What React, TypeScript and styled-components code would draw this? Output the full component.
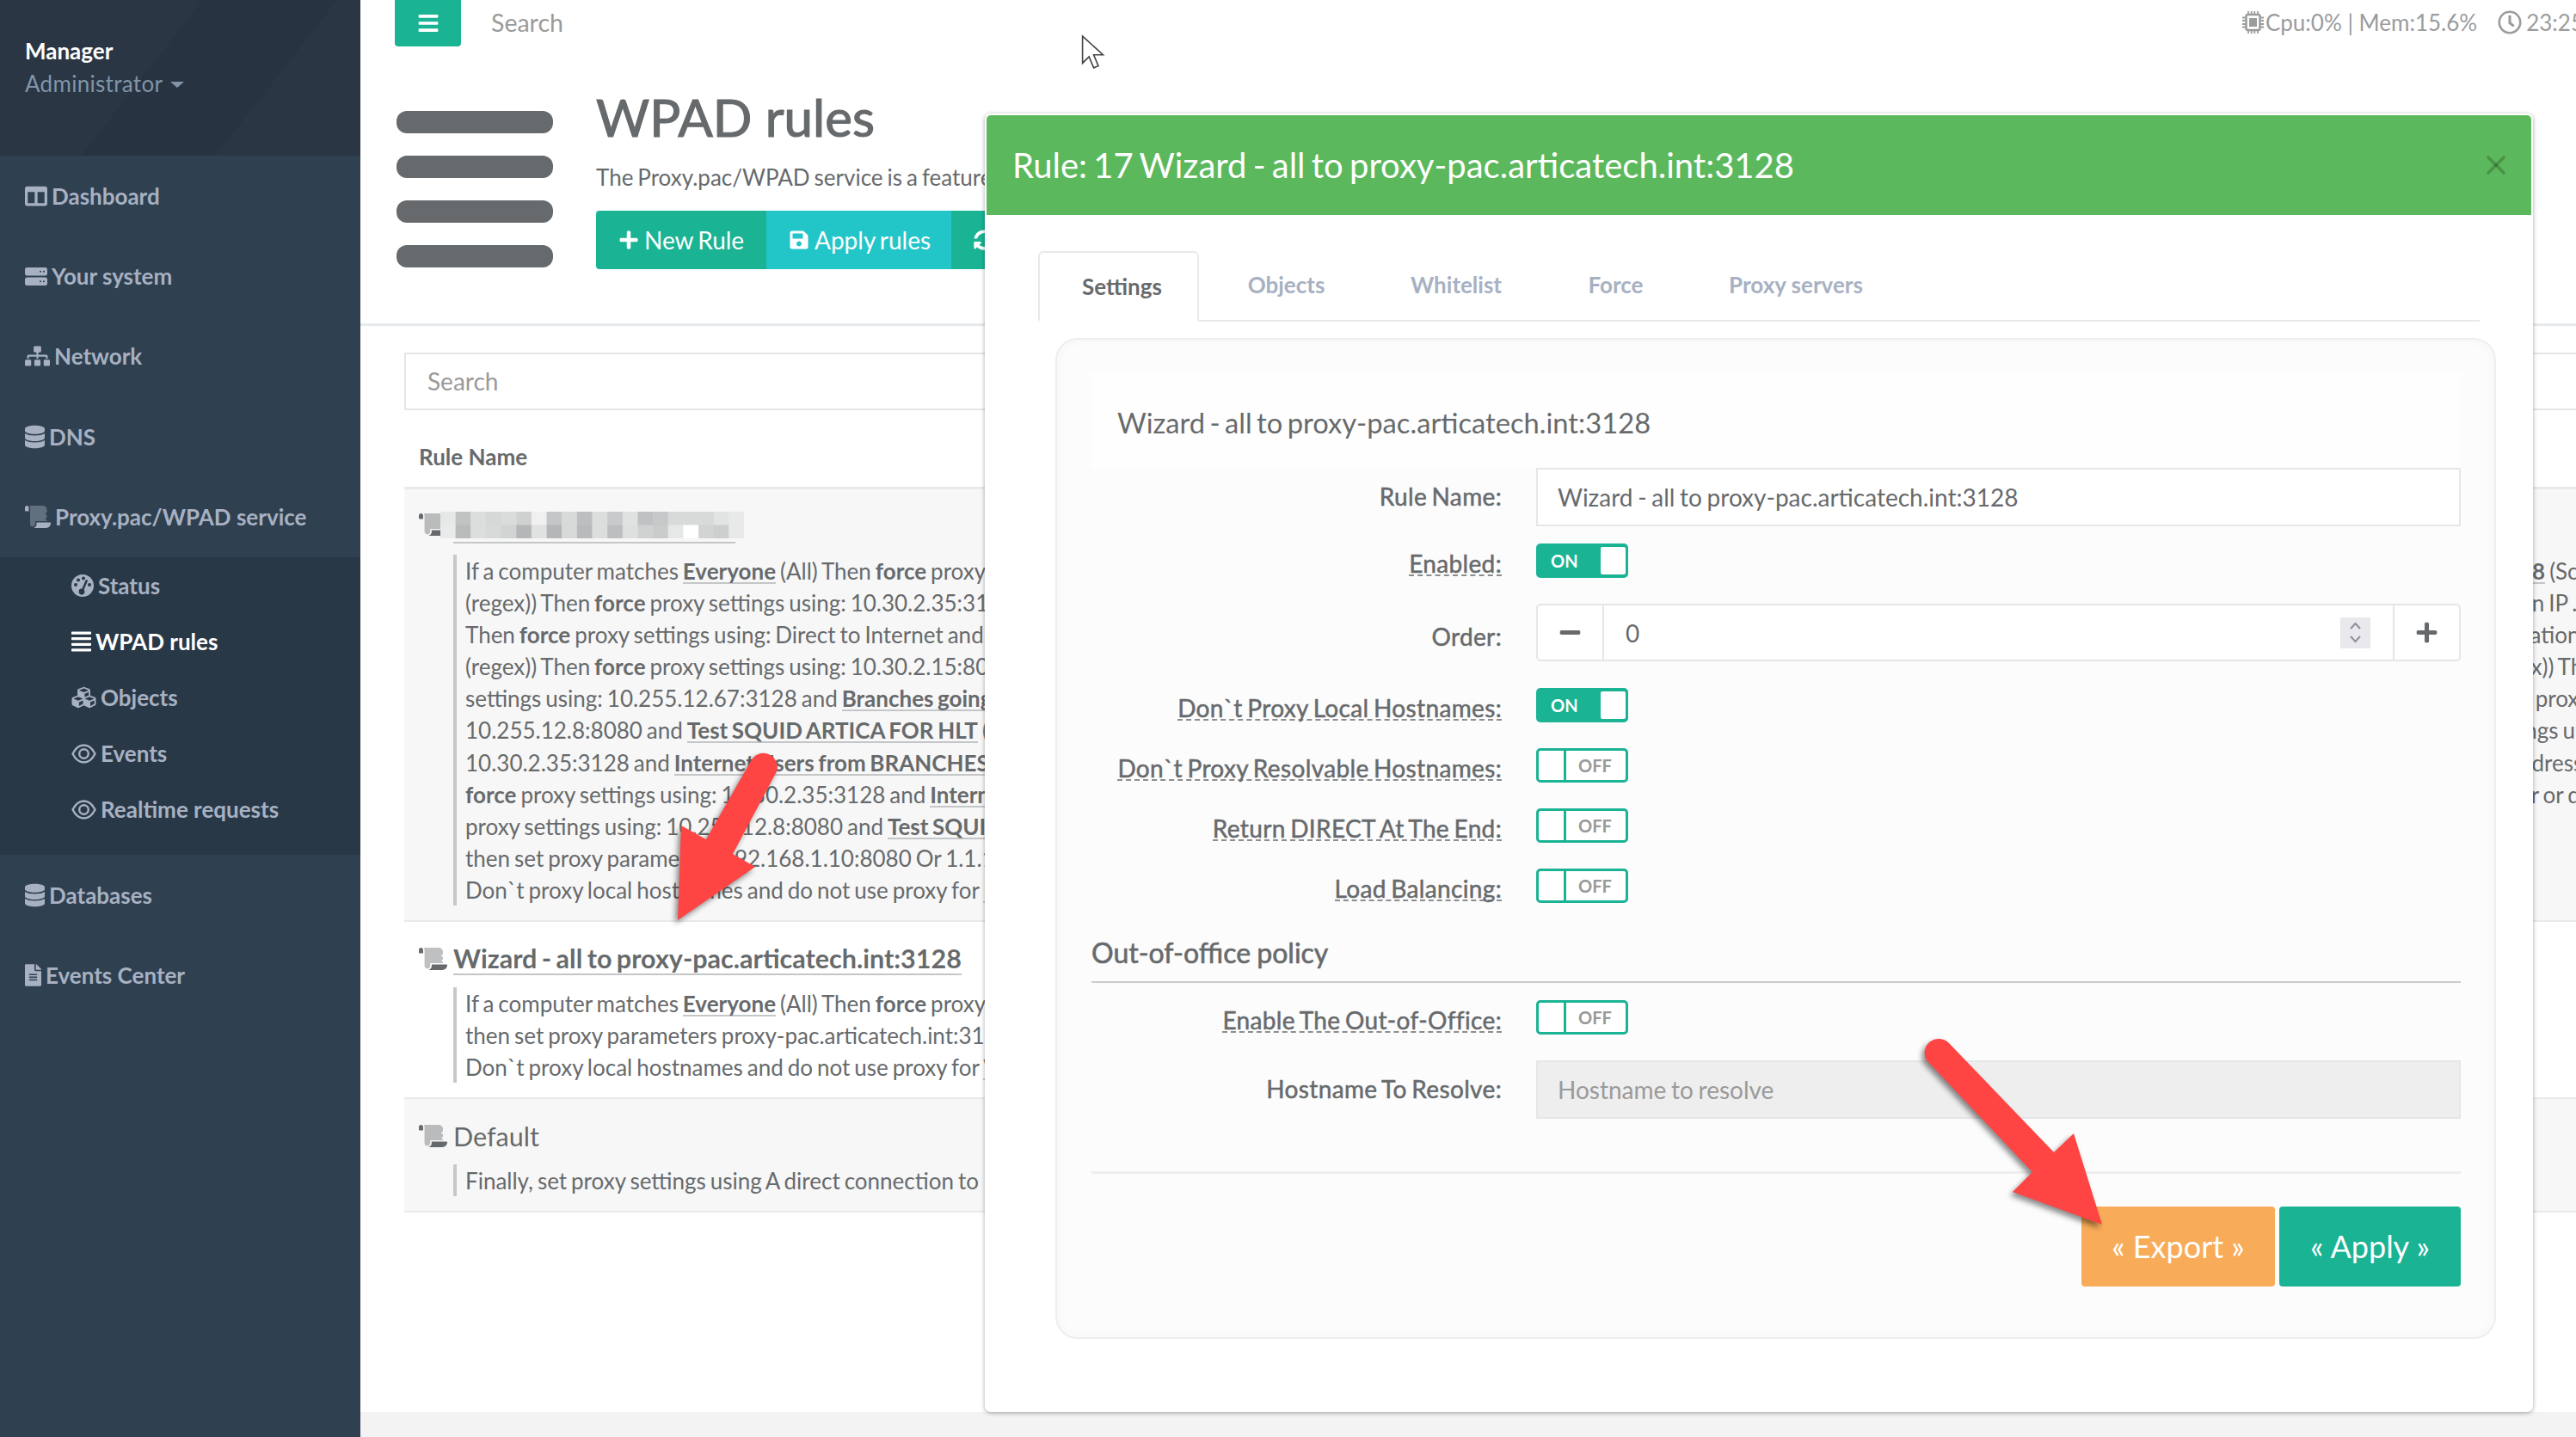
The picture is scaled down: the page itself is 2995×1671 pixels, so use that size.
import React from 'react';
import styled, { createGlobalStyle } from 'styled-components';
import { FaColumns, FaSitemap, FaDatabase, FaAlignJustify, FaCubes, FaFileAlt, FaBars, FaPlus, FaMinus, FaSave, FaSyncAlt, FaRegClock } from 'react-icons/fa';
import { X } from 'lucide-react';

const GlobalStyle = createGlobalStyle`
    html, body {
        margin: 0;
        width: 2995px;
        height: 1671px;
        overflow: hidden;
        background: #fff;
    }
    body {
        font-family: Lato, "Liberation Sans", sans-serif;
        font-size: 26px;
        color: #676a6c;
    }
    * { box-sizing: border-box; }
`;

const Page = styled.div`
    position: relative;
    display: flex;
    width: 2995px;
    height: 1671px;
    overflow: hidden;
`;

/* sidebar */
const Sidebar = styled.nav`
    flex: 0 0 419px;
    background: #2f4050;
    color: #a7b1c2;
    font-weight: 700;
`;

const Profile = styled.div`
    height: 181px;
    padding: 40px 0 0 29px;
    background:
        linear-gradient(128deg, transparent 42%, rgba(0,0,0,.05) 42%, rgba(0,0,0,.05) 70%, transparent 70%),
        #2a3644;
`;

const ProfileName = styled.div`
    color: #fff;
    line-height: 38px;
`;

const ProfileRole = styled.div`
    display: flex;
    align-items: center;
    gap: 9px;
    color: #8095a8;
    font-weight: 400;
    letter-spacing: .3px;
    line-height: 38px;
`;

const Caret = styled.span`
    width: 0;
    height: 0;
    margin-top: 3px;
    border-left: 8px solid transparent;
    border-right: 8px solid transparent;
    border-top: 7px solid #8095a8;
`;

const NavItem = styled.div`
    display: flex;
    align-items: center;
    gap: 5px;
    height: 93.4px;
    padding-left: 29px;
    white-space: nowrap;
`;

const SubNav = styled.div`
    height: 346px;
    background: #293846;
`;

const SubItem = styled.div<{ $active?: boolean }>`
    display: flex;
    align-items: center;
    gap: 5px;
    height: 65.2px;
    padding-left: 83px;
    white-space: nowrap;
    color: ${p => (p.$active ? '#fff' : '#a7b1c2')};
`;

const NavIcon = styled.span<{ $w: number }>`
    display: inline-flex;
    flex: 0 0 ${p => p.$w}px;
    svg {
        display: block;
        width: ${p => p.$w}px;
        height: 28px;
    }
`;

const DrawnIcon = styled.svg<{ $w: number; $h: number }>`
    flex: 0 0 ${p => p.$w}px;
    width: ${p => p.$w}px;
    height: ${p => p.$h}px;
`;

const ScrollIcon: React.FC<{ w?: number }> = ({ w = 30 }) => (
    <DrawnIcon $w={w} $h={26} viewBox="0 0 640 512" preserveAspectRatio="none" fill="currentColor">
        <path d="M48 0C21.5 0 0 21.5 0 48v64c0 8.8 7.2 16 16 16h80V48C96 21.5 74.500 0 48 0z" />
        <path opacity=".42" d="M111.600 0H448c52.900 0 96 43.100 96 96v50l-44 36 44 40v44l-38 32 38 34v20H256v60.600c0 31.900-21.700 61.400-53.200 66.500C162.700 485.700 128 454.900 128 416V48c0-18.100-6.300-34.600-16.400-48z" />
        <path d="M288 384v32c0 52.900-43.100 96-96 96h336c61.900 0 112-50.100 112-112 0-8.800-7.200-16-16-16H288z" />
    </DrawnIcon>
);

const ServerIcon = () => (
    <DrawnIcon $w={26} $h={21} viewBox="0 0 26 21">
        <rect x="0" y="0" width="26" height="9.500" rx="2.500" fill="#a7b1c2" />
        <rect x="0" y="11.500" width="26" height="9.500" rx="2.500" fill="#a7b1c2" />
        <circle cx="18" cy="4.700" r="1" fill="#2f4050" />
        <circle cx="22" cy="4.700" r="1" fill="#2f4050" />
        <circle cx="18" cy="16.200" r="1" fill="#2f4050" />
        <circle cx="22" cy="16.200" r="1" fill="#2f4050" />
    </DrawnIcon>
);

const GaugeIcon = () => (
    <DrawnIcon $w={26} $h={26} viewBox="0 0 26 26">
        <circle cx="13" cy="13" r="13" fill="#a7b1c2" />
        <circle cx="5" cy="12" r="2" fill="#293846" />
        <circle cx="8" cy="6.500" r="2" fill="#293846" />
        <circle cx="14" cy="4.500" r="2" fill="#293846" />
        <circle cx="21" cy="12" r="2" fill="#293846" />
        <path d="M11 23L18 6.500" stroke="#293846" strokeWidth="2.500" />
        <circle cx="12" cy="20" r="3.400" fill="#293846" />
    </DrawnIcon>
);

const EyeIcon = () => (
    <DrawnIcon $w={29} $h={23} viewBox="0 0 29 23" fill="none" stroke="#a7b1c2" strokeWidth="2.400">
        <path d="M1.500 11.500C5 4.500 9.500 1.500 14.500 1.500S24 4.500 27.500 11.500C24 18.500 19.500 21.500 14.500 21.500S5 18.500 1.500 11.500Z" />
        <circle cx="14.500" cy="11.500" r="5.300" />
    </DrawnIcon>
);

const ChipIcon = () => (
    <DrawnIcon $w={25} $h={28} viewBox="0 0 25 28" fill="#9a9c9e">
        <rect x="4.500" y="5" width="16" height="18" fill="none" stroke="#9a9c9e" strokeWidth="2.500" rx="2" />
        <rect x="8" y="9" width="9" height="10" />
        <path d="M7 1v4M10.700 1v4M14.300 1v4M18 1v4M7 23v4M10.700 23v4M14.300 23v4M18 23v4M0 8.500h4M0 12h4M0 16h4M0 19.500h4M21 8.500h4M21 12h4M21 16h4M21 19.500h4" stroke="#9a9c9e" strokeWidth="1.800" />
    </DrawnIcon>
);

/* main column */
const Main = styled.main`
    flex: 1;
    min-width: 0;
    display: flex;
    flex-direction: column;
`;

const Content = styled.div`
    flex: 1;
    min-height: 0;
    overflow: hidden;
`;

const Footer = styled.div`
    flex: 0 0 29px;
    background: #f3f3f4;
`;

const TopBar = styled.div`
    display: flex;
    justify-content: space-between;
    height: 105px;
    padding-left: 40px;
`;

const TopLeft = styled.div`
    display: flex;
    align-items: flex-start;
    gap: 35px;
`;

const MenuButton = styled.div`
    display: flex;
    align-items: center;
    justify-content: center;
    width: 77px;
    height: 54px;
    background: #1ab394;
    border-radius: 0 0 4px 4px;
    color: #fff;
    svg { width: 26px; height: 26px; }
`;

const TopSearch = styled.div`
    color: #9a9a9a;
    font-size: 28.500px;
    line-height: 52px;
`;

const Status = styled.div`
    display: flex;
    align-items: center;
    gap: 2px;
    width: 388px;
    height: 52px;
    overflow: hidden;
    white-space: nowrap;
    color: #9a9c9e;
`;

const StatusClock = styled.span`
    display: inline-flex;
    align-items: center;
    gap: 5px;
    margin-left: 22px;
    svg { width: 28px; height: 28px; }
`;

const Heading = styled.div`
    display: flex;
    gap: 50px;
    height: 274px;
    padding-left: 42px;
    border-bottom: 3px solid #e7eaec;
`;

const BigIcon = styled.svg`
    flex: none;
    width: 182px;
    height: 182px;
    margin-top: 24px;
    fill: #676a6c;
`;

const Title = styled.h1`
    margin: -2px 0 2px;
    font-size: 60px;
    font-weight: 400;
    line-height: 66px;
    -webkit-text-stroke: 1.2px currentColor;
`;

const Lead = styled.div`
    margin-top: 19px;
    line-height: 37px;
    word-spacing: -1.700px;
    white-space: nowrap;
`;

const ButtonGroup = styled.div`
    display: flex;
    margin-top: 20px;
    height: 68px;
`;

const HeadButton = styled.div<{ $bg: string; $w: number }>`
    display: flex;
    align-items: center;
    gap: 6px;
    width: ${p => p.$w}px;
    padding-left: 26px;
    background: ${p => p.$bg};
    color: #fff;
    font-size: 28px;
    word-spacing: -2px;
    white-space: nowrap;
    &:first-child { border-radius: 4px 0 0 4px; }
    svg { width: 24px; height: 24px; flex: none; }
`;

const TableWrap = styled.div`
    padding: 31px 0 0 51px;
`;

const SearchBox = styled.div`
    height: 67px;
    margin-right: -10px;
    padding-left: 25px;
    border: 2px solid #e5e6e7;
    color: #9a9a9a;
    font-size: 28px;
    line-height: 63px;
`;

const TableHead = styled.div`
    height: 92px;
    padding: 36px 0 0 17px;
    border-bottom: 3px solid #e7eaec;
    font-weight: 700;
    line-height: 37px;
`;

const Rule = styled.div<{ $odd?: boolean }>`
    padding: 23px 0 17px 17px;
    border-bottom: 2px solid #e7eaec;
    background: ${p => (p.$odd ? '#f7f7f7' : '#fff')};
`;

const RuleTitle = styled.div<{ $linked?: boolean }>`
    display: flex;
    align-items: center;
    gap: 7px;
    height: 40px;
    font-size: 30.500px;
    font-weight: ${p => (p.$linked ? 700 : 400)};
    word-spacing: -2px;
    white-space: nowrap;
    color: #676a6c;
`;

const RuleLink = styled.span`
    display: inline-block;
    line-height: 36px;
    border-bottom: 2px solid #c4c6c8;
`;

const Mosaic = styled.svg`
    flex: none;
    width: 353px;
    height: 31px;
    margin-left: -15px;
`;

const MosaicTitle = styled(RuleTitle)`
    margin-top: -2px;
`;

const RuleUnderline = styled.div`
    width: 328px;
    height: 2px;
    margin-left: 40px;
    background: #c4c6c8;
`;

const RuleBody = styled.div`
    margin: 13px 0 0 40px;
    padding-left: 10px;
    border-left: 4px solid #c8c8c8;
`;

const RuleLine = styled.div`
    display: flex;
    justify-content: space-between;
    height: 37.1px;
    line-height: 39px;
    word-spacing: -1.700px;
    white-space: nowrap;
`;

const RuleTail = styled.span`
    flex: none;
    width: 66px;
    overflow: hidden;
`;

const Strong = styled.b`
    font-weight: 700;
`;

const StrongLink = styled.b`
    display: inline-block;
    font-weight: 700;
    line-height: 26px;
    border-bottom: 2px solid #c4c6c8;
`;

/* modal */
const Modal = styled.div`
    position: absolute;
    left: 1145px;
    top: 132px;
    width: 1800px;
    height: 1510px;
    background: #fff;
    border: 2px solid #fff;
    border-radius: 7px;
    box-shadow: 0 1px 5px rgba(0,0,0,.35);
    z-index: 5;
`;

const ModalHeader = styled.div`
    display: flex;
    align-items: center;
    justify-content: space-between;
    height: 116px;
    padding: 0 23px 0 30px;
    background: #5cb85c;
    border-radius: 5px 5px 0 0;
    color: #fff;
    font-size: 40px;
    word-spacing: -3px;
    white-space: nowrap;
    svg { color: rgba(0,0,0,.2); }
`;

const ModalBody = styled.div`
    padding: 42px 60px 0;
`;

const Tabs = styled.div`
    display: flex;
    height: 82px;
    border-bottom: 2px solid #e7eaec;
`;

const Tab = styled.div<{ $active?: boolean; $w: number }>`
    flex: 0 0 ${p => p.$w}px;
    height: 82px;
    padding-left: ${p => (p.$active ? 8 : 0)}px;
    text-align: center;
    line-height: 79px;
    font-weight: 700;
    color: ${p => (p.$active ? '#676a6c' : '#a7b1c2')};
    background: ${p => (p.$active ? '#fff' : 'transparent')};
    border: ${p => (p.$active ? '2px solid #e7eaec' : 'none')};
    border-bottom: ${p => (p.$active ? '2px solid #fff' : 'none')};
    border-radius: 6px 6px 0 0;
`;

const Panel = styled.div`
    height: 1164px;
    margin: 19px -19px 0 20px;
    padding: 39px 39px 0 40px;
    background: #fcfcfc;
    border: 2px solid #eeeeee;
    border-radius: 26px;
    box-shadow: inset 0 0 14px rgba(0,0,0,.03);
`;

const PanelTitle = styled.div`
    height: 110px;
    padding: 38px 0 0 30px;
    background: #fefefe;
    font-size: 32.700px;
    word-spacing: -3px;
    line-height: 40px;
    white-space: nowrap;
`;

const FormRow = styled.div<{ $gap: number }>`
    display: flex;
    align-items: flex-start;
    gap: 40px;
    margin-top: ${p => p.$gap}px;
`;

const Label = styled.div<{ $top: number }>`
    flex: 0 0 477px;
    height: 30px;
    padding-top: ${p => p.$top}px;
    text-align: right;
    font-size: 28px;
    letter-spacing: .35px;
    word-spacing: -2px;
    line-height: 37px;
    white-space: nowrap;
    -webkit-text-stroke: .5px currentColor;
`;

const Hint = styled.span`
    display: inline-block;
    line-height: 26px;
    border-bottom: 2px dashed #8b8d8f;
`;

const TextField = styled.div<{ $disabled?: boolean }>`
    flex: 1;
    height: 68px;
    padding-left: 23px;
    border: 2px solid #e5e6e7;
    background: ${p => (p.$disabled ? '#eeeeee' : '#fff')};
    color: ${p => (p.$disabled ? '#9a9a9a' : '#676a6c')};
    font-size: 28px;
    word-spacing: -1.500px;
    line-height: 64px;
    white-space: nowrap;
`;

const SwitchOn = styled.div`
    display: flex;
    align-items: center;
    justify-content: space-between;
    width: 107px;
    height: 40px;
    padding: 0 3px 0 17px;
    background: #1ab394;
    border-radius: 5px;
    color: #fff;
    font-size: 20px;
    font-weight: 700;
`;

const SwitchKnob = styled.span`
    width: 29px;
    height: 32px;
    background: #fff;
    border-radius: 2px;
`;

const SwitchOff = styled.div`
    display: flex;
    align-items: center;
    width: 107px;
    height: 40px;
    border: 3px solid #1ab394;
    border-radius: 5px;
    background: #fff;
    color: #999;
    font-size: 20px;
    font-weight: 700;
`;

const SwitchLeft = styled.span`
    flex: 0 0 32px;
    height: 100%;
    border-right: 3px solid #1ab394;
`;

const SwitchText = styled.span`
    margin-left: 14px;
`;

const Stepper = styled.div`
    flex: 1;
    display: flex;
    align-items: center;
    height: 67px;
    background: #fff;
    border: 2px solid #e5e6e7;
    border-radius: 5px;
`;

const StepButton = styled.div<{ $side: 'left' | 'right' }>`
    display: flex;
    align-items: center;
    justify-content: center;
    flex: 0 0 77px;
    height: 100%;
    ${p => (p.$side === 'left' ? 'border-right' : 'border-left')}: 2px solid #e5e6e7;
    svg { width: 27px; height: 27px; }
`;

const StepValue = styled.div`
    flex: 1;
    padding-left: 25px;
    font-size: 28px;
`;

const Spinner = styled.div`
    display: flex;
    flex-direction: column;
    align-items: center;
    justify-content: center;
    gap: 7px;
    width: 35px;
    height: 36px;
    margin-right: 26px;
    background: #e8e8ed;
`;

const SpinArrow = styled.svg`
    width: 15px;
    height: 9px;
    fill: none;
    stroke: #8f8f9d;
    stroke-width: 2;
`;

const SectionTitle = styled.div`
    margin-top: 38px;
    font-size: 32px;
    line-height: 40px;
    word-spacing: -1px;
    white-space: nowrap;
    -webkit-text-stroke: .6px currentColor;
`;

const SectionRule = styled.div`
    height: 2px;
    margin-top: 13px;
    background: #cccccc;
`;

const ThinRule = styled.div`
    height: 3px;
    margin-top: 61px;
    background: #eeeeee;
`;

const Actions = styled.div`
    display: flex;
    justify-content: flex-end;
    gap: 5px;
    margin-top: 38px;
`;

const ActionButton = styled.div<{ $bg: string; $w: number }>`
    width: ${p => p.$w}px;
    height: 93px;
    border-radius: 4px;
    background: ${p => p.$bg};
    color: #fff;
    font-size: 36px;
    line-height: 93px;
    text-align: center;
    white-space: nowrap;
`;

/* things lying over the page */
const Overlay = styled.svg<{ $x: number; $y: number }>`
    position: absolute;
    left: ${p => p.$x}px;
    top: ${p => p.$y}px;
    z-index: 9;
    overflow: visible;
`;

const RedArrow = styled.path`
    fill: #ff4444;
    filter: drop-shadow(-3px 4px 3px rgba(0,0,0,.45));
`;

const Switch: React.FC<{ on?: boolean }> = ({ on }) => on ? (
    <SwitchOn>ON<SwitchKnob /></SwitchOn>
) : (
    <SwitchOff><SwitchLeft /><SwitchText>OFF</SwitchText></SwitchOff>
);

const mosaicTop = ['e6e8e8','c0c2c3','dcdede','d6d8d8','dadcdc','cfd1d1','f0f0f0','c4c6c7','d8dada','bcbebf','dcdede','c8cacb','e0e2e2','bfc1c2','c6c8c9','d8dada','d8dada','d8dada','e2e4e4','e8eaea'];
const mosaicBottom = ['e9ebeb','b8babb','dcdede','d8dada','d2d4d4','b4b6b7','e0e2e2','b4b6b7','d8dada','b8babb','dcdede','bcbebf','dee0e0','d0d2d2','cacccc','e6e8e8','ffffff','d2d4d4','cccecf','e8eaea'];

const App: React.FC = () => (
    <Page>
        <GlobalStyle />
        <Sidebar>
            <Profile>
                <ProfileName>Manager</ProfileName>
                <ProfileRole>Administrator <Caret /></ProfileRole>
            </Profile>
            <NavItem><NavIcon $w={26}><FaColumns /></NavIcon>Dashboard</NavItem>
            <NavItem><ServerIcon />Your system</NavItem>
            <NavItem><NavIcon $w={29}><FaSitemap /></NavIcon>Network</NavItem>
            <NavItem><NavIcon $w={23}><FaDatabase /></NavIcon>DNS</NavItem>
            <NavItem><ScrollIcon />Proxy.pac/WPAD service</NavItem>
            <SubNav>
                <SubItem><GaugeIcon />Status</SubItem>
                <SubItem $active><NavIcon $w={23}><FaAlignJustify /></NavIcon>WPAD rules</SubItem>
                <SubItem><NavIcon $w={29}><FaCubes /></NavIcon>Objects</SubItem>
                <SubItem><EyeIcon />Events</SubItem>
                <SubItem><EyeIcon />Realtime requests</SubItem>
            </SubNav>
            <NavItem><NavIcon $w={23}><FaDatabase /></NavIcon>Databases</NavItem>
            <NavItem><NavIcon $w={19}><FaFileAlt /></NavIcon>Events Center</NavItem>
        </Sidebar>

        <Main>
            <Content>
                <TopBar>
                    <TopLeft>
                        <MenuButton><FaBars /></MenuButton>
                        <TopSearch>Search</TopSearch>
                    </TopLeft>
                    <Status>
                        <ChipIcon />Cpu:0% | Mem:15.6%
                        <StatusClock><FaRegClock />23:25:10</StatusClock>
                    </Status>
                </TopBar>

                <Heading>
                    <BigIcon viewBox="0 0 182 182">
                        <rect x="0" y="0" width="182" height="26" rx="12" />
                        <rect x="0" y="52" width="182" height="26" rx="12" />
                        <rect x="0" y="104" width="182" height="26" rx="12" />
                        <rect x="0" y="156" width="182" height="26" rx="12" />
                    </BigIcon>
                    <div>
                        <Title>WPAD rules</Title>
                        <Lead>The Proxy.pac/WPAD service is a feature</Lead>
                        <ButtonGroup>
                            <HeadButton $bg="#1ab394" $w={198}><FaPlus />New Rule</HeadButton>
                            <HeadButton $bg="#23c6c8" $w={215}><FaSave />Apply rules</HeadButton>
                            <HeadButton $bg="#1ab394" $w={160}><FaSyncAlt />Reload</HeadButton>
                        </ButtonGroup>
                    </div>
                </Heading>

                <TableWrap>
                    <SearchBox>Search</SearchBox>
                    <TableHead>Rule Name</TableHead>

                    <Rule $odd>
                        <MosaicTitle>
                            <ScrollIcon w={33} />
                            <Mosaic viewBox="0 0 20 2" preserveAspectRatio="none">
                                {mosaicTop.map((c, i) => <rect key={i} x={i} y={0} width={1.02} height={1.05} fill={`#${c}`} />)}
                                {mosaicBottom.map((c, i) => <rect key={i} x={i} y={1} width={1.02} height={1} fill={`#${c}`} />)}
                            </Mosaic>
                        </MosaicTitle>
                        <RuleUnderline />
                        <RuleBody>
                            <RuleLine><span>If a computer matches <StrongLink>Everyone</StrongLink> (All) Then <Strong>force</Strong> proxy settings</span><RuleTail><StrongLink>28</StrongLink> (Sc</RuleTail></RuleLine>
                            <RuleLine><span>(regex)) Then <Strong>force</Strong> proxy settings using: 10.30.2.35:3128</span><RuleTail>on IP .</RuleTail></RuleLine>
                            <RuleLine><span>Then <Strong>force</Strong> proxy settings using: Direct to Internet and</span><RuleTail>cation</RuleTail></RuleLine>
                            <RuleLine><span>(regex)) Then <Strong>force</Strong> proxy settings using: 10.30.2.15:8080</span><RuleTail>ex)) Th</RuleTail></RuleLine>
                            <RuleLine><span>settings using: 10.255.12.67:3128 and <StrongLink>Branches going</StrongLink></span><RuleTail>e prox</RuleTail></RuleLine>
                            <RuleLine><span>10.255.12.8:8080 and <StrongLink>Test SQUID ARTICA FOR HLT</StrongLink> (</span><RuleTail>ings u</RuleTail></RuleLine>
                            <RuleLine><span>10.30.2.35:3128 and <StrongLink>Internet Users from BRANCHES</StrongLink></span><RuleTail>ddress</RuleTail></RuleLine>
                            <RuleLine><span><Strong>force</Strong> proxy settings using: 10.30.2.35:3128 and <StrongLink>Internet</StrongLink></span><RuleTail>er or d</RuleTail></RuleLine>
                            <RuleLine><span>proxy settings using: 10.255.12.8:8080 and <StrongLink>Test SQUID</StrongLink></span></RuleLine>
                            <RuleLine><span>then set proxy parameters 192.168.1.10:8080 Or 1.1.1.1</span></RuleLine>
                            <RuleLine><span>Don`t proxy local hostnames and do not use proxy for <StrongLink>None</StrongLink></span></RuleLine>
                        </RuleBody>
                    </Rule>

                    <Rule>
                        <RuleTitle $linked>
                            <ScrollIcon w={33} />
                            <RuleLink>Wizard - all to proxy-pac.articatech.int:3128</RuleLink>
                        </RuleTitle>
                        <RuleBody>
                            <RuleLine><span>If a computer matches <StrongLink>Everyone</StrongLink> (All) Then <Strong>force</Strong> proxy settings</span></RuleLine>
                            <RuleLine><span>then set proxy parameters proxy-pac.articatech.int:3128</span></RuleLine>
                            <RuleLine><span>Don`t proxy local hostnames and do not use proxy for <StrongLink>Web</StrongLink></span></RuleLine>
                        </RuleBody>
                    </Rule>

                    <Rule $odd>
                        <RuleTitle>
                            <ScrollIcon w={33} />
                            Default
                        </RuleTitle>
                        <RuleBody>
                            <RuleLine><span>Finally, set proxy settings using A direct connection to</span></RuleLine>
                        </RuleBody>
                    </Rule>
                </TableWrap>
            </Content>
            <Footer />
        </Main>

        <Modal>
            <ModalHeader>
                Rule: 17 Wizard - all to proxy-pac.articatech.int:3128
                <X size={36} strokeWidth={2.5} />
            </ModalHeader>
            <ModalBody>
                <Tabs>
                    <Tab $active $w={187}>Settings</Tab>
                    <Tab $w={203}>Objects</Tab>
                    <Tab $w={192}>Whitelist</Tab>
                    <Tab $w={179}>Force</Tab>
                    <Tab $w={240}>Proxy servers</Tab>
                </Tabs>
                <Panel>
                    <PanelTitle>Wizard - all to proxy-pac.articatech.int:3128</PanelTitle>
                    <FormRow $gap={0}>
                        <Label $top={15}>Rule Name:</Label>
                        <TextField>Wizard - all to proxy-pac.articatech.int:3128</TextField>
                    </FormRow>
                    <FormRow $gap={20}>
                        <Label $top={5}><Hint>Enabled:</Hint></Label>
                        <Switch on />
                    </FormRow>
                    <FormRow $gap={30}>
                        <Label $top={20}>Order:</Label>
                        <Stepper>
                            <StepButton $side="left"><FaMinus /></StepButton>
                            <StepValue>0</StepValue>
                            <Spinner>
                                <SpinArrow viewBox="0 0 15 9"><polyline points="2,8 7.500,2 13,8" /></SpinArrow>
                                <SpinArrow viewBox="0 0 15 9"><polyline points="2,1 7.500,7 13,1" /></SpinArrow>
                            </Spinner>
                            <StepButton $side="right"><FaPlus /></StepButton>
                        </Stepper>
                    </FormRow>
                    <FormRow $gap={31}>
                        <Label $top={5}><Hint>Don`t Proxy Local Hostnames:</Hint></Label>
                        <Switch on />
                    </FormRow>
                    <FormRow $gap={30}>
                        <Label $top={5}><Hint>Don`t Proxy Resolvable Hostnames:</Hint></Label>
                        <Switch />
                    </FormRow>
                    <FormRow $gap={30}>
                        <Label $top={5}><Hint>Return DIRECT At The End:</Hint></Label>
                        <Switch />
                    </FormRow>
                    <FormRow $gap={30}>
                        <Label $top={5}><Hint>Load Balancing:</Hint></Label>
                        <Switch />
                    </FormRow>
                    <SectionTitle>Out-of-office policy</SectionTitle>
                    <SectionRule />
                    <FormRow $gap={20}>
                        <Label $top={5}><Hint>Enable The Out-of-Office:</Hint></Label>
                        <Switch />
                    </FormRow>
                    <FormRow $gap={30}>
                        <Label $top={15}>Hostname To Resolve:</Label>
                        <TextField $disabled>Hostname to resolve</TextField>
                    </FormRow>
                    <ThinRule />
                    <Actions>
                        <ActionButton $bg="#f8ac59" $w={225}>« Export »</ActionButton>
                        <ActionButton $bg="#1ab394" $w={211}>« Apply »</ActionButton>
                    </Actions>
                </Panel>
            </ModalBody>
        </Modal>

        <Overlay $x={770} $y={865} width={145} height={215} viewBox="770 865 145 215">
            <RedArrow d="M903 897L852 993L878 1008L788 1070L792 960L821 976L873 885A16.200 16.200 0 0 1 903 897Z" />
        </Overlay>
        <Overlay $x={2230} $y={1200} width={230} height={240} viewBox="2230 1200 230 240">
            <RedArrow d="M2266 1213L2388 1340L2411 1318L2444 1424L2340 1386L2363 1363L2240 1233A16.500 16.500 0 0 1 2266 1213Z" />
        </Overlay>
        <Overlay $x={1257} $y={41} width={27} height={40} viewBox="0 0 24 37">
            <path d="M1 1L1 30L8 23L13 35L18 33L13 21L23 21Z" fill="#fff" stroke="#444" strokeWidth="1.500" />
        </Overlay>
    </Page>
);

export default App;
